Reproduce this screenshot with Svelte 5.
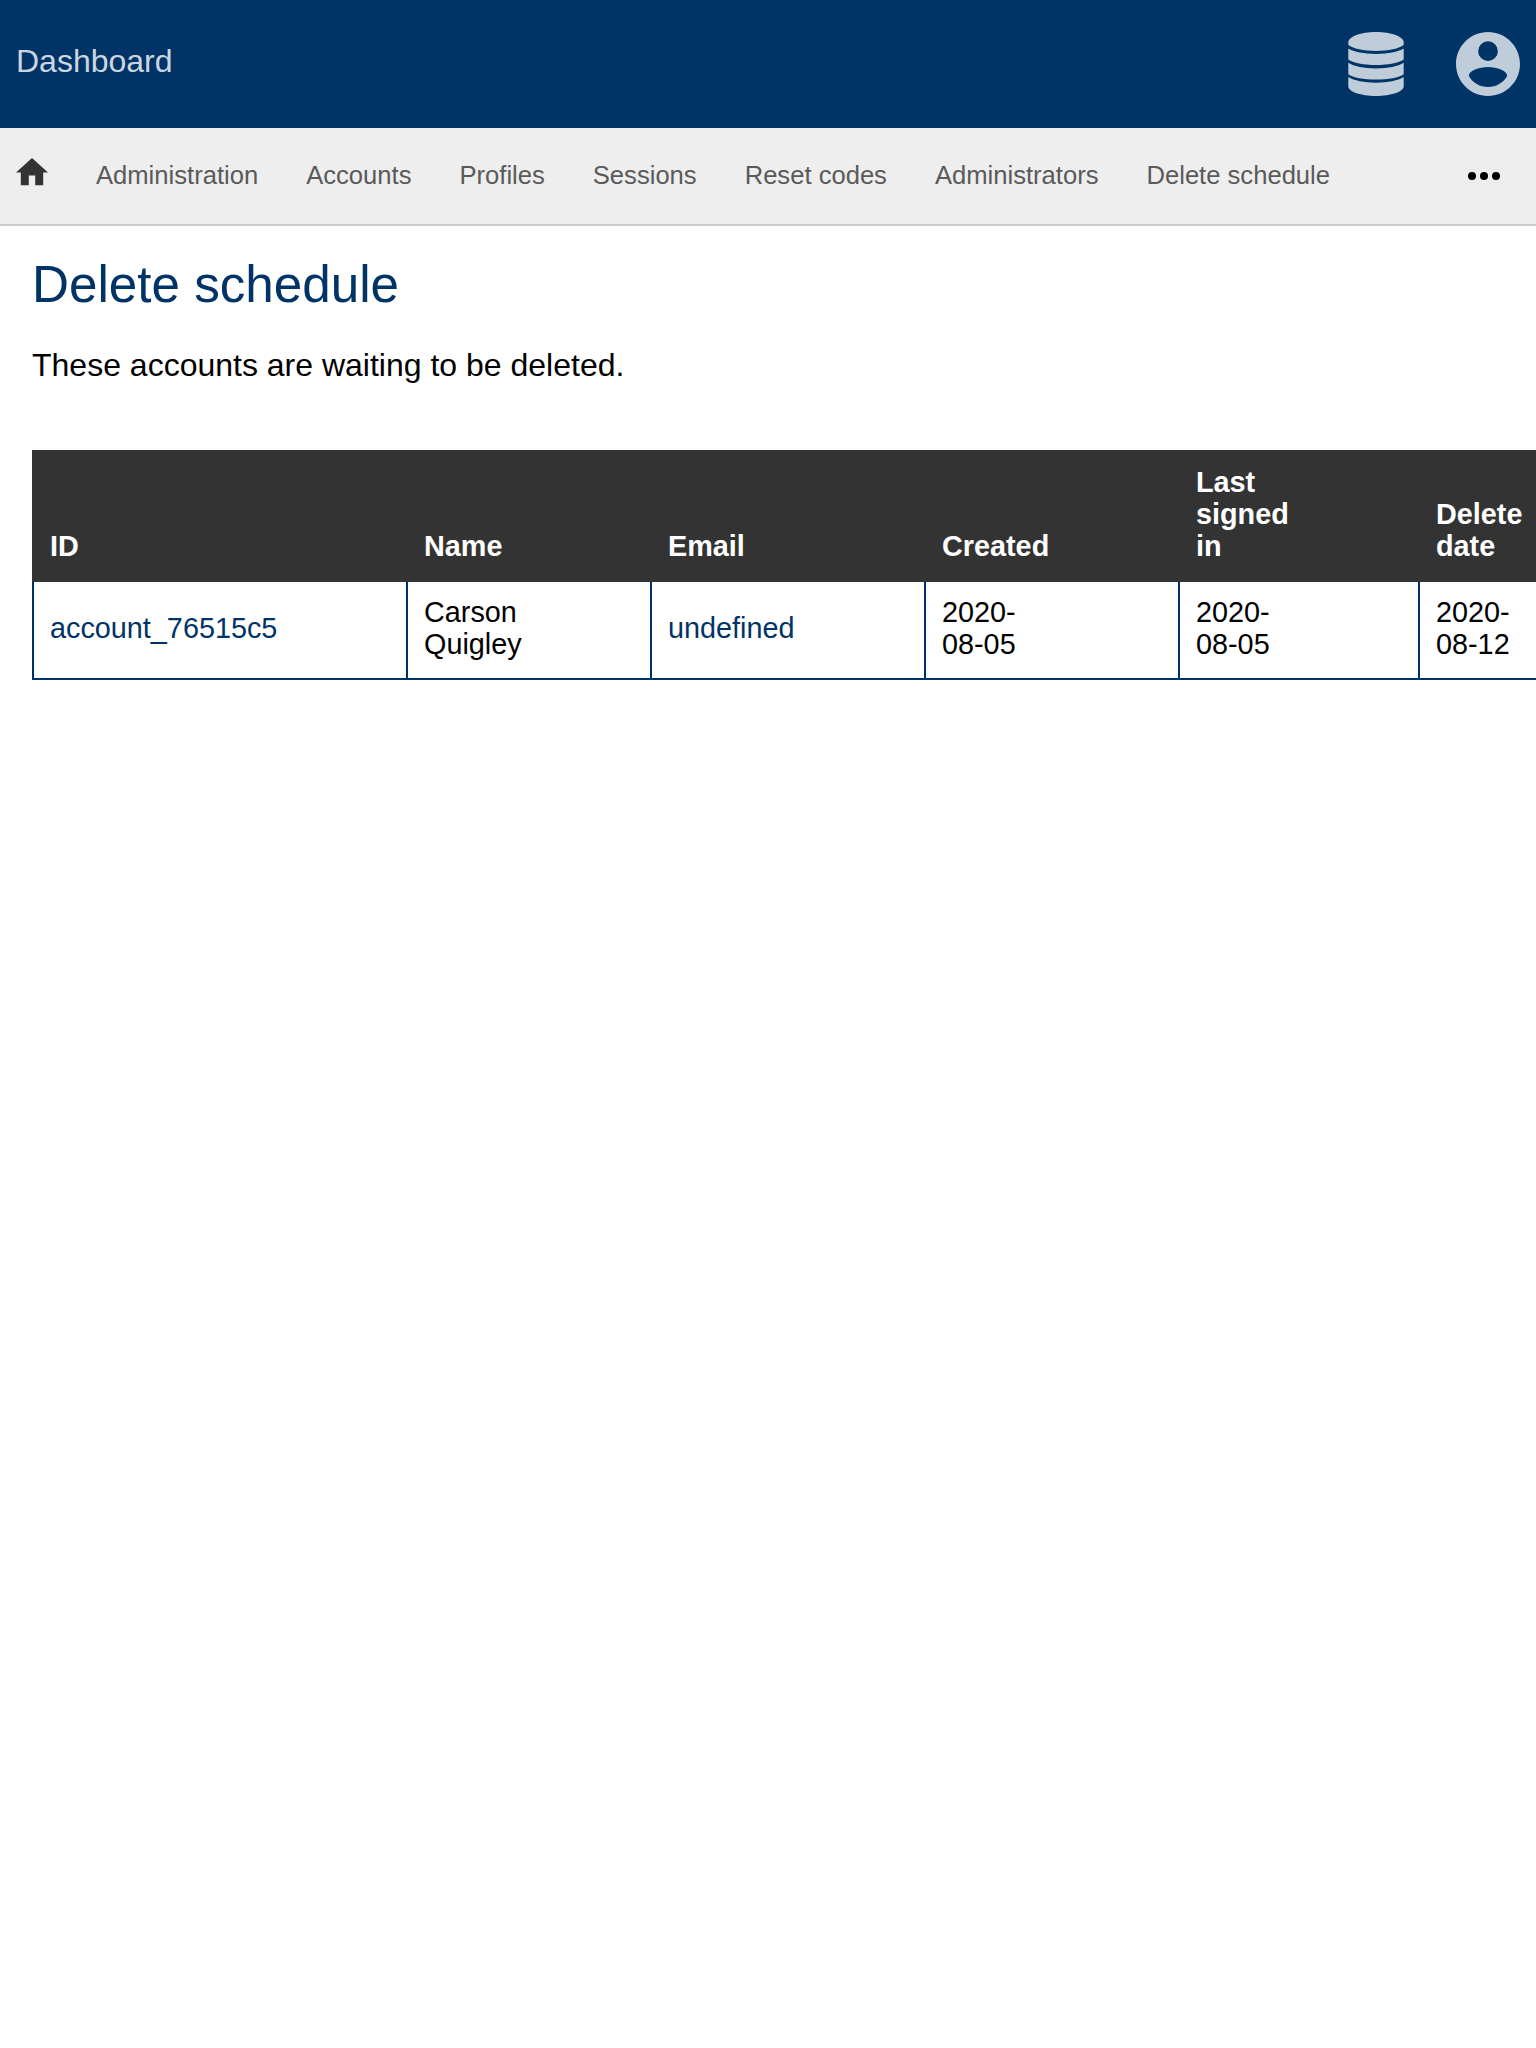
<script>
  const links = [
    'Administration',
    'Accounts',
    'Profiles',
    'Sessions',
    'Reset codes',
    'Administrators',
    'Delete schedule'
  ];
  const columns = [
    { key: 'id', lines: ['ID'] },
    { key: 'name', lines: ['Name'] },
    { key: 'email', lines: ['Email'] },
    { key: 'created', lines: ['Created'] },
    { key: 'signed', lines: ['Last', 'signed', 'in'] },
    { key: 'delete', lines: ['Delete', 'date'] }
  ];
  const accounts = [
    {
      id: 'account_76515c5',
      name: ['Carson', 'Quigley'],
      email: 'undefined',
      dates: [
        ['2020-', '08-05'],
        ['2020-', '08-05'],
        ['2020-', '08-12']
      ]
    }
  ];
</script>

<header class="topbar">
  <a class="brand" href="#home">Dashboard</a>
  <div class="tools">
    <svg class="database" viewBox="0 0 56 64" aria-label="Database">
      <path d="M28 0C43.200 0 55.700 4.600 55.700 10.300V12.700C51.500 16.600 40.500 18.900 28 18.900S4.500 16.600 .3 12.700V10.300C.3 4.600 12.800 0 28 0Z" />
      <path d="M.3 16.600C6 20 16 21.900 28 21.900S50 20 55.700 16.600V27.500C51 30.900 40.500 33 28 33S5 30.900 .3 27.500Z" />
      <path d="M.3 30.800C6 34.400 16 36.400 28 36.400S50 34.400 55.700 30.800V42.200C51 45.600 40.500 47.500 28 47.500S5 45.600 .3 42.200Z" />
      <path d="M.3 45.100C6 48.700 16 50.700 28 50.700S50 48.700 55.700 45.100V54.200C55.700 59.600 43.200 64 28 64S.3 59.600 .3 54.200Z" />
    </svg>
    <svg class="person" viewBox="2 2 20 20" aria-label="Account">
      <path d="M12 2C6.480 2 2 6.480 2 12s4.480 10 10 10 10-4.480 10-10S17.520 2 12 2zm0 2.900a3.080 3.080 0 1 1 0 6.160a3.080 3.080 0 1 1 0-6.160zm0 14.300c-2.500 0-4.710-1.280-6-3.450.03-1.760 3.200-2.850 6-2.850 2.800 0 5.970 1.090 6 2.850-1.290 2.170-3.500 3.450-6 3.450z" />
    </svg>
  </div>
</header>

<nav class="menu">
  <svg class="home" viewBox="2 3 20 17" aria-label="Home">
    <path d="M10 20v-6h4v6h5v-8h3L12 3 2 12h3v8z" />
  </svg>
  {#each links as link}
    <a href="#section">{link}</a>
  {/each}
  <svg class="more" viewBox="0 0 32 8" aria-label="More">
    <circle cx="4" cy="4" r="4" />
    <circle cx="16" cy="4" r="4" />
    <circle cx="28" cy="4" r="4" />
  </svg>
</nav>

<main>
  <h1>Delete schedule</h1>
  <p>These accounts are waiting to be deleted.</p>
  <table>
    <colgroup>
      {#each columns as column}
        <col class={'col-' + column.key} />
      {/each}
    </colgroup>
    <thead>
      <tr>
        {#each columns as column}
          <th>{#each column.lines as line}<span>{line}</span>{/each}</th>
        {/each}
      </tr>
    </thead>
    <tbody>
      {#each accounts as account}
        <tr>
          <td><a href="#account">{account.id}</a></td>
          <td>{#each account.name as part}<span>{part}</span>{/each}</td>
          <td><a href="#email">{account.email}</a></td>
          {#each account.dates as date}
            <td>{#each date as part}<span>{part}</span>{/each}</td>
          {/each}
        </tr>
      {/each}
    </tbody>
  </table>
</main>

<style>
  :global(body) {
    background: #fff;
    color: #000;
    font-family: 'Liberation Sans', Arial, sans-serif;
    font-size: 32px;
  }
  a {
    text-decoration: none;
  }
  .topbar {
    display: flex;
    align-items: center;
    justify-content: space-between;
    box-sizing: border-box;
    height: 128px;
    padding: 0 16px;
    background: #003366;
  }
  .brand {
    padding-bottom: 6px;
    color: #ccd6e0;
    line-height: 36px;
  }
  .tools {
    display: flex;
    gap: 52px;
    fill: #bfccd9;
  }
  .database {
    width: 56px;
    height: 64px;
  }
  .person {
    width: 64px;
    height: 64px;
  }
  .menu {
    display: flex;
    align-items: center;
    gap: 48px;
    box-sizing: border-box;
    height: 98px;
    padding: 0 36px 0 16px;
    border-bottom: 2px solid #ccc;
    background: #eee;
  }
  .menu a {
    padding-bottom: 2px;
    color: #5a5a5a;
    font-size: 25.6px;
    line-height: 30px;
    white-space: nowrap;
  }
  .home {
    width: 32px;
    height: 27.2px;
    margin-bottom: 8px;
    fill: #333;
  }
  .more {
    width: 32px;
    height: 8px;
    margin-left: auto;
  }
  main {
    padding: 29px 0 0 32px;
    overflow: hidden;
  }
  h1 {
    margin: 0;
    color: #003366;
    font-size: 51.2px;
    font-weight: 400;
    line-height: 60px;
  }
  p {
    margin: 31px 0 0;
    line-height: 38px;
  }
  table {
    width: 1628px;
    margin-top: 66px;
    border-collapse: collapse;
    table-layout: fixed;
    font-size: 28.8px;
    line-height: 32px;
  }
  .col-id {
    width: 374px;
  }
  .col-name {
    width: 244px;
  }
  .col-email {
    width: 274px;
  }
  .col-created {
    width: 254px;
  }
  .col-signed,
  .col-delete {
    width: 240px;
  }
  th,
  td {
    padding: 14px 16px 18px;
    text-align: left;
  }
  th {
    border: 2px solid #333;
    background: #333;
    color: #fff;
    font-weight: 700;
    vertical-align: bottom;
  }
  td {
    border: 2px solid #003366;
    vertical-align: middle;
  }
  td a {
    color: #003366;
  }
  th span,
  td span,
  td a {
    display: block;
  }
</style>
